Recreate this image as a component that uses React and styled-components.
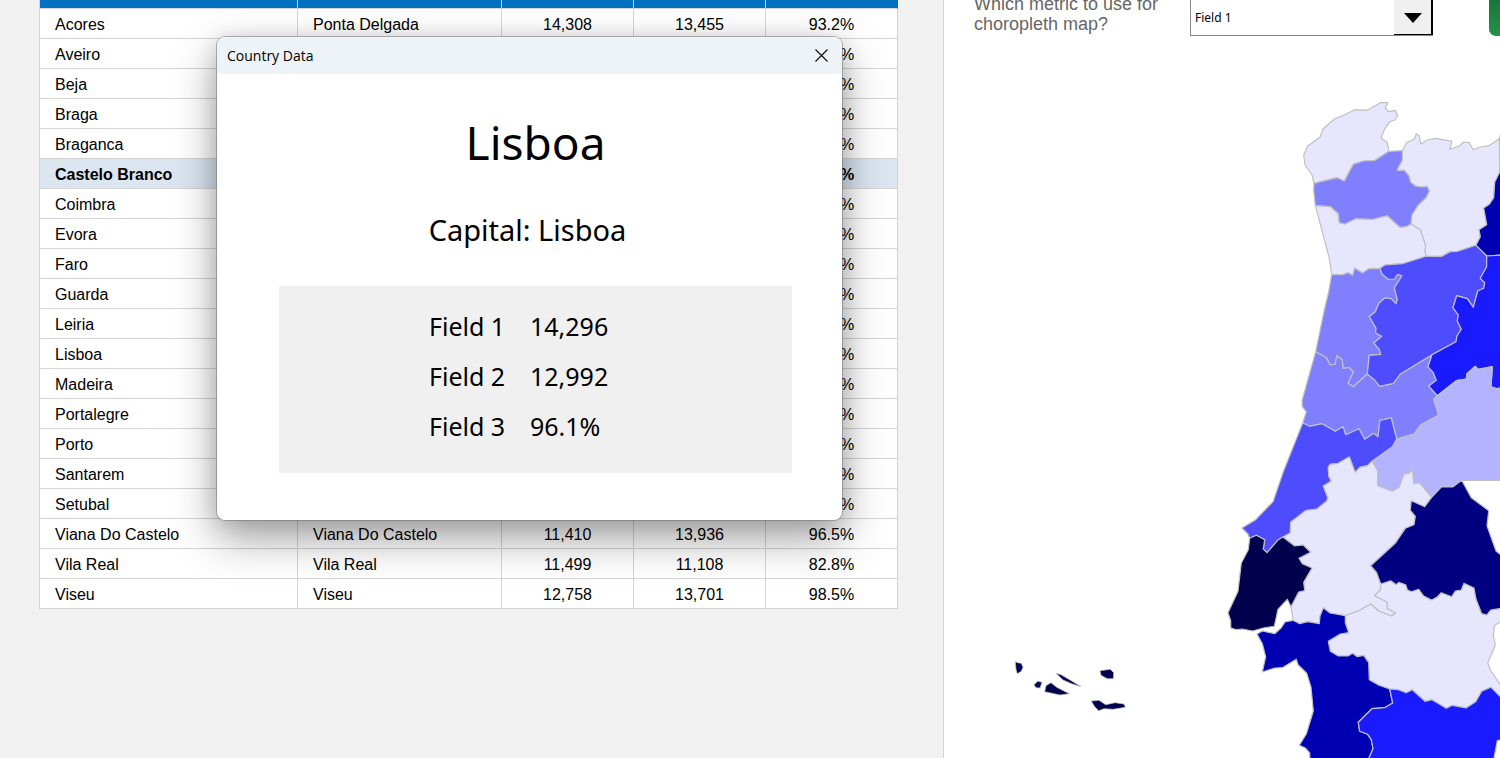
import React, { useState } from "react";
import styled, { createGlobalStyle } from "styled-components";

const GlobalStyle = createGlobalStyle`
  * {
    box-sizing: border-box;
  }

  body {
    margin: 0;
    overflow: hidden;
    background: #f1f1f1;
    color: #000;
    font-family: "Liberation Sans", Arial, sans-serif;
    font-size: 16px;
  }
`;

const Page = styled.div`
  position: relative;
  display: flex;
  height: 100vh;
  overflow: hidden;
`;

const TablePanel = styled.main`
  flex: 0 0 944px;
  padding: 0 45px 0 39px;
  border-right: 1px solid #d4d4d4;
`;

const Table = styled.table`
  width: 100%;
  table-layout: fixed;
  border-collapse: separate;
  border-spacing: 0;
  border-left: 1px solid #d4d4d4;
  background: #fff;
`;

const Th = styled.th`
  width: ${p => p.width};
  height: 9px;
  padding: 0;
  background: #0070c0;
  border-right: 1px solid #d4d4d4;
  border-bottom: 1px solid #d4d4d4;

  &:last-child {
    border-right-color: #0070c0;
  }
`;

const Td = styled.td`
  height: 30px;
  padding: 2px 15px 0;
  line-height: 26px;
  overflow: hidden;
  white-space: nowrap;
  text-align: ${p => p.align || "left"};
  border-right: 1px solid #d4d4d4;
  border-bottom: 1px solid #d4d4d4;
`;

const Row = styled.tr`
  background: ${p => (p.$active ? "#dce6f1" : "#fff")};
  font-weight: ${p => (p.$active ? "bold" : "normal")};
`;

const MapPanel = styled.section`
  flex: 1;
  min-width: 0;
  display: flex;
  flex-direction: column;
  overflow: hidden;
  background: #fff;
`;

const Toolbar = styled.div`
  display: flex;
  align-items: flex-end;
  height: 36px;
  padding-left: 30px;
  overflow: hidden;
`;

const MetricLabel = styled.label`
  flex: 0 0 216px;
  padding-right: 20px;
  color: #666;
  font-size: 18px;
  line-height: 20px;
  padding-bottom: 2px;
`;

const SelectBox = styled.div`
  position: relative;
  flex: 0 0 243px;
  height: 48px;
  margin-right: 56px;
`;

const Select = styled.select`
  appearance: none;
  width: 100%;
  height: 100%;
  padding: 11px 40px 0 4px;
  border: 1px solid #828790;
  border-radius: 0;
  background: #fff;
  color: #000;
  font-family: "Noto Sans", sans-serif;
  font-size: 12px;
`;

const SelectArrow = styled.span`
  position: absolute;
  top: 0;
  right: 0;
  bottom: 1px;
  width: 39px;
  display: flex;
  align-items: flex-end;
  justify-content: center;
  padding-bottom: 11px;
  background: #f0f0f0;
  border-right: 2px solid #000;
  border-bottom: 1px solid #000;
  pointer-events: none;
`;

const GreenButton = styled.button`
  flex: 0 0 120px;
  height: 48px;
  border: 0;
  border-radius: 7px;
  background: linear-gradient(#176b35, #23934a);
`;

const MapDrawing = styled.svg`
  flex: 1;
  display: block;
  width: 100%;
  min-height: 0;
`;

const Region = styled.polygon`
  fill: ${p => p.fill};
  stroke: #c0c0c0;
  stroke-width: ${p => (p.$island ? 0.7 : 1.2)};
  stroke-linejoin: round;
`;

const Dialog = styled.div`
  position: absolute;
  top: 36px;
  left: 216px;
  width: 627px;
  overflow: hidden;
  border: 1px solid rgba(110, 110, 110, 0.5);
  border-radius: 9px;
  background: #fff;
  background-clip: padding-box;
  box-shadow: 0 18px 44px rgba(0, 0, 0, 0.36), 0 2px 20px rgba(0, 0, 0, 0.12);
  font-family: "Noto Sans", sans-serif;
`;

const TitleBar = styled.div`
  display: flex;
  align-items: center;
  justify-content: space-between;
  height: 37px;
  padding: 0 4px 0 10px;
  background: #eef3f8;
  font-family: "Open Sans", sans-serif;
  font-size: 14px;
`;

const CloseButton = styled.button`
  display: flex;
  align-items: center;
  justify-content: center;
  width: 34px;
  height: 30px;
  padding: 0;
  border: 0;
  background: none;
`;

const DialogBody = styled.div`
  display: flex;
  flex-direction: column;
  padding: 36px 50px 47px 62px;
`;

const Heading = styled.h1`
  margin: 0;
  text-align: center;
  font-weight: normal;
  font-size: 46px;
  line-height: 64px;
`;

const Capital = styled.p`
  margin: 35px 0;
  padding-right: 16px;
  text-align: center;
  font-size: 29px;
  line-height: 42px;
`;

const Fields = styled.dl`
  display: grid;
  grid-template-columns: 101px 1fr;
  grid-auto-rows: 50px;
  align-items: center;
  margin: 0;
  padding: 15px 0 22px 150px;
  background: #f0f0f0;
  font-size: 25px;
`;

const Value = styled.dd`
  margin: 0;
`;

const columns = [
  { key: "district", title: "District", width: "258px" },
  { key: "capital", title: "Capital", width: "204px" },
  { key: "field1", title: "Field 1", align: "center" },
  { key: "field2", title: "Field 2", align: "center" },
  { key: "field3", title: "Field 3", align: "center" },
];

const districts = [
  ["Acores", "Ponta Delgada", "14,308", "13,455", "93.2%"],
  ["Aveiro", "Aveiro", "12,614", "11,872", "88.4%"],
  ["Beja", "Beja", "13,520", "12,210", "91.7%"],
  ["Braga", "Braga", "12,107", "13,046", "85.9%"],
  ["Braganca", "Braganca", "13,842", "11,960", "90.3%"],
  ["Castelo Branco", "Castelo Branco", "11,875", "12,431", "94.8%"],
  ["Coimbra", "Coimbra", "12,230", "13,318", "87.6%"],
  ["Evora", "Evora", "11,340", "12,754", "92.5%"],
  ["Faro", "Faro", "12,965", "11,683", "89.1%"],
  ["Guarda", "Guarda", "13,476", "12,095", "95.4%"],
  ["Leiria", "Leiria", "12,890", "13,227", "86.2%"],
  ["Lisboa", "Lisboa", "14,296", "12,992", "96.1%"],
  ["Madeira", "Funchal", "12,451", "11,538", "84.7%"],
  ["Portalegre", "Portalegre", "14,012", "12,369", "97.3%"],
  ["Porto", "Porto", "11,402", "13,580", "90.8%"],
  ["Santarem", "Santarem", "11,386", "12,647", "88.9%"],
  ["Setubal", "Setubal", "13,790", "11,824", "93.6%"],
  ["Viana Do Castelo", "Viana Do Castelo", "11,410", "13,936", "96.5%"],
  ["Vila Real", "Vila Real", "11,499", "11,108", "82.8%"],
  ["Viseu", "Viseu", "12,758", "13,701", "98.5%"],
];

const regions = [
  {
    name: "Viana Do Castelo",
    fill: "#e6e6ff",
    points: "1380.3,102.7 1387.7,102.7 1385.3,108 1388.3,111.7 1395.3,110.3 1397.7,116 1394.7,120 1390,121.7 1384.7,129 1381,137.7 1387.3,142.7 1389,151.3 1375,160.3 1363.3,161 1353.3,164.3 1344.3,181 1337,177.7 1314,183.3 1312,175 1305,165 1303.7,155 1307.7,146 1320,137.3 1323,129 1334.7,118.7 1344.3,115 1354.7,109.7 1367.3,110.3",
  },
  {
    name: "Vila Real",
    fill: "#e6e6ff",
    points: "1402.3,150.7 1406.7,142.7 1414.3,139 1416.3,133.7 1419.3,136 1420.7,144 1427.3,140 1436,138.3 1452,141.3 1449.7,149.3 1459.3,146 1463.7,142 1469.3,142.7 1473,149.7 1480.3,147 1489,145.7 1499.3,138.7 1500,160 1499.7,172 1494.7,182.3 1493.7,197.7 1489.3,204.3 1483.7,208 1486.7,224.7 1479,229.7 1480.3,236.7 1476,245.3 1457.7,251.3 1450,251.7 1442,256.3 1426.3,256.3 1424.7,251.7 1425.7,245.7 1420.3,229.7 1411,224 1411.7,215.3 1418.3,205 1426,197.7 1429.3,191 1427,186.3 1421.3,187 1415.3,186 1410.3,181.7 1409,176 1404.3,170.3 1397,170.3 1402.3,160",
  },
  {
    name: "Porto",
    fill: "#e6e6ff",
    points: "1315.3,205.3 1330.7,206.7 1338.3,213.7 1339.3,222.7 1344.7,224 1355.7,218.7 1372.7,219.3 1387.3,215.7 1400,227.3 1407,226.3 1411,224 1420.3,229.7 1425.7,245.7 1424.7,251.7 1426.3,256.3 1402.3,263.7 1385,265 1380,268.3 1369,268.7 1362.3,273 1354.7,268 1352.7,275.3 1348,272.7 1342.7,274.7 1331.7,274.7 1329.3,258.3",
  },
  {
    name: "Braga",
    fill: "#8080ff",
    points: "1389,151.3 1402.3,150.7 1402.3,160 1397,170.3 1404.3,170.3 1409,176 1410.3,181.7 1415.3,186 1421.3,187 1427,186.3 1429.3,191 1426,197.7 1418.3,205 1411.7,215.3 1411,224 1407,226.3 1400,227.3 1387.3,215.7 1372.7,219.3 1355.7,218.7 1344.7,224 1339.3,222.7 1338.3,213.7 1330.7,206.7 1315.3,205.3 1313.7,190 1314,183.3 1337,177.7 1344.3,181 1353.3,164.3 1363.3,161 1375,160.3",
  },
  {
    name: "Braganca",
    fill: "#0000b3",
    points: "1502,128 1499.3,138.7 1500,160 1499.7,172 1494.7,182.3 1493.7,197.7 1489.3,204.3 1483.7,208 1486.7,224.7 1479,229.7 1480.3,236.7 1476,245.3 1486.7,256 1502,255",
  },
  {
    name: "Aveiro",
    fill: "#8080ff",
    points: "1380,268.3 1382,274 1388,279.3 1394.3,279 1397.7,274.3 1402,275.7 1394.3,288 1397.3,299.3 1396,303.7 1391,298.7 1384.7,298 1379,303.3 1375.3,311.7 1369.3,316.7 1376,328 1375.7,333 1381.7,336.3 1373.7,343 1379.3,349.3 1380.7,354.3 1369.3,355.3 1367.3,374 1353.3,386.7 1348,383.3 1353.3,371.7 1349,367.3 1343,368.3 1342.3,360 1337,355.7 1335,364.3 1330,364.7 1326.3,357.7 1315.7,351.7 1324.3,310 1328.7,291.7 1331.7,274.7 1342.7,274.7 1348,272.7 1352.7,275.3 1354.7,268 1362.3,273 1369,268.7",
  },
  {
    name: "Coimbra",
    fill: "#8080ff",
    points: "1315.7,351.7 1326.3,357.7 1330,364.7 1335,364.3 1337,355.7 1342.3,360 1343,368.3 1349,367.3 1353.3,371.7 1348,383.3 1353.3,386.7 1367.3,374 1374.7,380 1379.7,386.3 1393.3,383.3 1400.3,374 1432,354.7 1428,366.7 1433.3,372.7 1436.3,380.3 1428.7,386 1437.3,395.7 1433.7,399.3 1438.7,415 1420.3,425.3 1414.3,434 1396.7,439 1391.3,418 1380,420.3 1378,436.7 1373.7,433.3 1364.7,439.3 1359,428.7 1345.7,434.7 1343,426.7 1335.3,431.3 1322,423.7 1309.7,426.3 1302.7,423 1306.3,411.7 1302.3,406.7 1302,400.7",
  },
  {
    name: "Viseu",
    fill: "#4d4dff",
    points: "1380,268.3 1385,265 1402.3,263.7 1426.3,256.3 1442,256.3 1450,251.7 1457.7,251.3 1476,245.3 1486.7,256 1486.7,266.7 1480.3,278.3 1484.7,282.7 1483.7,288.3 1477.7,291 1473.3,307.3 1467.3,298.7 1456.7,295.7 1453,307.7 1458.3,315 1457.3,321 1461.3,329.3 1457,336 1456,341.7 1432,354.7 1400.3,374 1393.3,383.3 1379.7,386.3 1374.7,380 1367.3,374 1369.3,355.3 1380.7,354.3 1379.3,349.3 1373.7,343 1381.7,336.3 1375.7,333 1376,328 1369.3,316.7 1375.3,311.7 1379,303.3 1384.7,298 1391,298.7 1396,303.7 1397.3,299.3 1394.3,288 1402,275.7 1397.7,274.3 1394.3,279 1388,279.3 1382,274",
  },
  {
    name: "Guarda",
    fill: "#1a1aff",
    points: "1486.7,256 1486.7,266.7 1480.3,278.3 1484.7,282.7 1483.7,288.3 1477.7,291 1473.3,307.3 1467.3,298.7 1456.7,295.7 1453,307.7 1458.3,315 1457.3,321 1461.3,329.3 1457,336 1456,341.7 1432,354.7 1428,366.7 1433.3,372.7 1436.3,380.3 1428.7,386 1437.3,395.7 1456.3,380.7 1466.3,379 1467,373.7 1475.3,366.3 1478.3,369.3 1492.3,366.7 1491,386.7 1497.3,388.7 1502,387.5 1502,255",
  },
  {
    name: "Castelo Branco",
    fill: "#b3b3ff",
    points: "1438.7,415 1433.7,399.3 1437.3,395.7 1456.3,380.7 1466.3,379 1467,373.7 1475.3,366.3 1478.3,369.3 1492.3,366.7 1491,386.7 1497.3,388.7 1502,387.5 1502,480.3 1461.7,480.3 1452.7,487 1441.3,487 1431.7,497.3 1419.7,483 1413.7,483.3 1412.3,470 1408.3,473.7 1404,473.7 1399.3,487.3 1392.3,491.3 1377.7,485.7 1377.7,470.7 1372,461.3 1392.3,446.7 1396.7,439 1414.3,434 1420.3,425.3",
  },
  {
    name: "Leiria",
    fill: "#4d4dff",
    points: "1302.7,423 1309.7,426.3 1322,423.7 1335.3,431.3 1343,426.7 1345.7,434.7 1359,428.7 1364.7,439.3 1373.7,433.3 1378,436.7 1380,420.3 1391.3,418 1396.7,439 1392.3,446.7 1372,461.3 1367.7,465.7 1360,467.3 1355,472.3 1349.3,457 1338.3,463.3 1330.3,464.3 1328.3,467.3 1328.7,475.7 1331.3,481.3 1323.3,486 1327.7,497.3 1327,501 1317,509 1305.7,510.7 1290.7,522.3 1290.3,533 1283,537 1278.3,539.7 1267,552.7 1263.3,549 1264.7,539.7 1256.3,535.3 1249.7,538.3 1248,534 1242,528 1255.3,520 1273,501.7 1283.3,471.7",
  },
  {
    name: "Santarem",
    fill: "#e6e6ff",
    points: "1372,461.3 1377.7,470.7 1377.7,485.7 1392.3,491.3 1399.3,487.3 1404,473.7 1408.3,473.7 1412.3,470 1413.7,483.3 1419.7,483 1431.7,497.3 1424.7,506.7 1411.3,500.7 1410.3,510.3 1415.3,516.3 1414,524.7 1405.3,528.3 1395.7,542.7 1370.7,565.7 1376.7,572.7 1380.7,584 1380.3,590 1374.7,595.7 1387.3,602.3 1387.3,608.3 1395.7,613.3 1391.3,616 1378.7,611 1370.7,604 1359.7,610.3 1345.3,615.7 1330,613 1323.3,607.7 1320,616.3 1319.3,623.7 1307.7,621.7 1299.7,623.7 1293,620.3 1291,606.7 1298.7,592 1304.7,590.7 1303.7,582.3 1312,568 1302.3,563.7 1299,558.3 1310.7,552.3 1303.3,545 1294.7,546 1283,537 1290.3,533 1290.7,522.3 1305.7,510.7 1317,509 1327,501 1327.7,497.3 1323.3,486 1331.3,481.3 1328.7,475.7 1328.3,467.3 1330.3,464.3 1338.3,463.3 1349.3,457 1355,472.3 1360,467.3 1367.7,465.7",
  },
  {
    name: "Lisboa",
    fill: "#00004d",
    points: "1283,537 1294.7,546 1303.3,545 1310.7,552.3 1299,558.3 1302.3,563.7 1312,568 1303.7,582.3 1304.7,590.7 1298.7,592 1291,606.7 1287.3,599.3 1278,609.3 1274.3,626.3 1263.3,628 1252.7,631 1242.3,629 1236.3,629.7 1230.7,627.7 1230.7,620.7 1228,612.7 1238,591.3 1241.3,563 1248.3,549.7 1249.7,538.3 1256.3,535.3 1264.7,539.7 1263.3,549 1267,552.7 1278.3,539.7",
  },
  {
    name: "Evora",
    fill: "#e6e6ff",
    points: "1380.7,584 1390.7,580.7 1396.3,584.7 1398.7,582.3 1405.7,584.7 1407.3,589.7 1411.3,591.7 1418.7,589.3 1423.7,596 1431.7,600 1437.3,597 1441.3,592.7 1451.7,596.7 1455.3,591 1461.3,590 1464,583.3 1474,588 1476,599 1481.7,613.7 1486.7,615 1490.7,610 1499.3,608.7 1502,608.7 1502,621 1494.7,625.3 1493.3,635.3 1495.3,645.3 1487.7,663 1490.3,670 1502,687 1502,698.3 1491,687.3 1481.7,691.3 1475.7,701.7 1466,708 1452.3,705.3 1446.3,708.3 1432,699.7 1425,701.3 1412.3,689.7 1406.3,692.7 1398.3,689.7 1389.7,689 1379,685.3 1369.3,679.7 1368.7,662.7 1363.7,655.3 1357.3,656.7 1352.7,653.3 1348,656 1338.3,656 1330.3,651.3 1328.3,641.3 1340.3,634 1348.7,632.7 1345.3,622.7 1345.3,615.7 1359.7,610.3 1370.7,604 1378.7,611 1391.3,616 1395.7,613.3 1387.3,608.3 1387.3,602.3 1374.7,595.7 1380.3,590",
  },
  {
    name: "Portalegre",
    fill: "#000080",
    points: "1461.7,480.3 1471.3,497.7 1488.7,510.7 1487,525.7 1496,551 1502,556 1502,608.7 1499.3,608.7 1490.7,610 1486.7,615 1481.7,613.7 1476,599 1474,588 1464,583.3 1461.3,590 1455.3,591 1451.7,596.7 1441.3,592.7 1437.3,597 1431.7,600 1423.7,596 1418.7,589.3 1411.3,591.7 1407.3,589.7 1405.7,584.7 1398.7,582.3 1396.3,584.7 1390.7,580.7 1380.7,584 1376.7,572.7 1370.7,565.7 1395.7,542.7 1405.3,528.3 1414,524.7 1415.3,516.3 1410.3,510.3 1411.3,500.7 1424.7,506.7 1431.7,497.3 1441.3,487 1452.7,487",
  },
  {
    name: "Setubal",
    fill: "#0000b3",
    points: "1293,620.3 1299.7,623.7 1307.7,621.7 1319.3,623.7 1320,616.3 1323.3,607.7 1330,613 1345.3,615.7 1345.3,622.7 1348.7,632.7 1340.3,634 1328.3,641.3 1330.3,651.3 1338.3,656 1348,656 1352.7,653.3 1357.3,656.7 1363.7,655.3 1368.7,662.7 1369.3,679.7 1379,685.3 1389.7,689 1392.7,703 1384.7,707.7 1372,708.7 1358.3,722.3 1359.7,731.3 1367.7,734.3 1371.3,739.7 1373,748.7 1369,758 1369,762 1310,762 1309.7,753 1305.3,748 1299.3,745.3 1306.3,734 1313.3,711 1311,687.3 1306.7,673.3 1298,664.7 1296.3,659.3 1282.3,667.7 1275,668 1262.3,672 1265.7,656.7 1262.3,643.7 1257,634 1262.3,631 1274.7,633.7 1281.3,627.7 1285,622",
  },
  {
    name: "Beja",
    fill: "#1a1aff",
    points: "1389.7,689 1398.3,689.7 1406.3,692.7 1412.3,689.7 1425,701.3 1432,699.7 1446.3,708.3 1452.3,705.3 1466,708 1475.7,701.7 1481.7,691.3 1491,687.3 1502,698.3 1502,739.5 1497.3,740.7 1494,758 1493,762 1369,762 1369,758 1373,748.7 1371.3,739.7 1367.7,734.3 1359.7,731.3 1358.3,722.3 1372,708.7 1384.7,707.7 1392.7,703",
  },
];

const islands = [
  "1015.3,661.7 1018.7,663 1021.3,663.3 1023,667.3 1021.3,671.3 1017.3,673.7 1016,669.3",
  "1034,684.7 1037.7,681.3 1042,682.3 1040,688 1036,687.7",
  "1051,682.7 1056.7,687.3 1069.3,693.7 1060,695 1044.7,691.7 1046,685.7",
  "1056,673.3 1061,674.7 1070,680 1081.3,686.7 1071.7,683.7 1063,680",
  "1100,670.7 1110.3,669.3 1113.7,672.7 1113.3,678.7 1107.3,678.7 1101,675.3",
  "1091.3,701 1099,700.3 1105.7,704.7 1115,702.7 1124,704 1125.3,707.3 1113.3,709.3 1104,708.7 1098.7,710.7 1094.7,706.7",
];

const DistrictTable = ({ active }) => (
  <Table>
    <thead>
      <tr>
        {columns.map(col => (
          <Th key={col.key} width={col.width} aria-label={col.title} />
        ))}
      </tr>
    </thead>
    <tbody>
      {districts.map(row => (
        <Row key={row[0]} $active={row[0] === active}>
          {row.map((cell, i) => (
            <Td key={columns[i].key} align={columns[i].align}>{cell}</Td>
          ))}
        </Row>
      ))}
    </tbody>
  </Table>
);

const PortugalMap = () => (
  <MapDrawing viewBox="944 36 556 722" preserveAspectRatio="xMinYMin slice" role="img" aria-label="Map of Portugal">
    {regions.map(region => (
      <Region key={region.name} fill={region.fill} points={region.points} />
    ))}
    {islands.map(points => (
      <Region key={points} $island fill="#00004d" points={points} />
    ))}
  </MapDrawing>
);

const CountryDialog = ({ data, onClose }) => (
  <Dialog role="dialog" aria-label="Country Data">
    <TitleBar>
      <span>Country Data</span>
      <CloseButton aria-label="Close" onClick={onClose}>
        <svg width="13" height="13" viewBox="0 0 13 13" stroke="#111" strokeWidth="1.2">
          <path d="M0.5 0.5L12.5 12.5M12.5 0.5L0.5 12.5" />
        </svg>
      </CloseButton>
    </TitleBar>
    <DialogBody>
      <Heading>{data[0]}</Heading>
      <Capital>Capital: {data[1]}</Capital>
      <Fields>
        {data.slice(2).map((value, i) => (
          <React.Fragment key={i}>
            <dt>Field {i + 1}</dt>
            <Value>{value}</Value>
          </React.Fragment>
        ))}
      </Fields>
    </DialogBody>
  </Dialog>
);

const App = () => {
  const [metric, setMetric] = useState("Field 1");
  const [open, setOpen] = useState(true);

  return (
    <Page>
      <GlobalStyle />
      <TablePanel>
        <DistrictTable active="Castelo Branco" />
      </TablePanel>
      <MapPanel>
        <Toolbar>
          <MetricLabel htmlFor="metric">Which metric to use for choropleth map?</MetricLabel>
          <SelectBox>
            <Select id="metric" value={metric} onChange={e => setMetric(e.target.value)}>
              <option>Field 1</option>
              <option>Field 2</option>
              <option>Field 3</option>
            </Select>
            <SelectArrow>
              <svg width="18" height="10" viewBox="0 0 18 10">
                <path d="M0 0H18L9 10Z" />
              </svg>
            </SelectArrow>
          </SelectBox>
          <GreenButton aria-label="Update map" />
        </Toolbar>
        <PortugalMap />
      </MapPanel>
      {open && (
        <CountryDialog data={districts.find(d => d[0] === "Lisboa")} onClose={() => setOpen(false)} />
      )}
    </Page>
  );
};

export default App;
